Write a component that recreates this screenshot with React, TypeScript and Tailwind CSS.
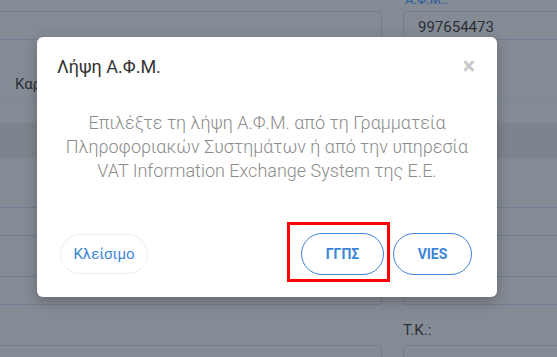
import React from "react";

function InputRow({ value }: { value?: string }) {
  return (
    <div className="flex gap-[21px] -ml-[4px] -mr-[6px]">
      <div className="w-[386px] h-[29px] border border-[#6e7f93] rounded-[4px]" />
      <div className="flex-1 h-[29px] border border-[#6e7f93] rounded-[4px] flex items-center pl-[14px] pt-[3px] text-[15px] text-[#2b2f36]">
        {value}
      </div>
    </div>
  );
}

export default function App() {
  return (
    <div
      className="relative w-[557px] h-[357px] overflow-hidden bg-[#858b94]"
      style={{ fontFamily: "Roboto, 'Noto Sans', sans-serif" }}
    >
      {/* Background page (dimmed) */}
      <div className="flex flex-col">
        <div className="h-[11px] relative">
          <div className="absolute left-[405px] -top-[10px] text-[13px] text-[#2c5f9e]">Α.Φ.Μ.:</div>
        </div>
        <InputRow value="997654473" />
        <div className="h-[60px] flex items-end pl-[15px] pb-[5px] text-[15px] leading-[22px] text-[#2b2f36]">Καρ</div>
        <div className="h-px bg-[#78889a]" />
        <div className="h-[22px]" />
        <div className="h-[35px] bg-[#7e848d]" />
        <div className="h-[49px]" />
        <InputRow />
        <div className="h-[40px]" />
        <InputRow />
        <div className="h-[40px] relative">
          <div className="absolute left-[403px] top-[14px] text-[15px] text-[#2b2f36]">Τ.Κ.:</div>
        </div>
        <InputRow />
      </div>

      {/* Modal */}
      <div className="absolute left-[37px] top-[37px] w-[460px] h-[260px] bg-white rounded-[6px] shadow-[0_4px_14px_rgba(0,0,0,0.25)] flex flex-col">
        <div className="flex items-center justify-between pl-[20px] pr-[22px] pt-[18px]">
          <div className="text-[18px] leading-[24px] text-[#333]">Λήψη Α.Φ.Μ.</div>
          <div className="text-[23px] leading-[24px] font-bold text-[#c8c8c8]">×</div>
        </div>
        <div className="mt-[32px] text-center text-[18px] leading-[24px] font-light text-[#8c8c8c]">
          Επιλέξτε τη λήψη Α.Φ.Μ. από τη Γραμματεία
          <br />
          Πληροφοριακών Συστημάτων ή από την υπηρεσία
          <br />
          VAT Information Exchange System της Ε.Ε.
        </div>
        <div className="relative flex items-center mt-[50px] pl-[23px] pr-[25px]">
          <button className="h-[40px] w-[88px] rounded-full border border-[#e6eef8] text-[15px] font-normal text-[#3b86d6]">
            Κλείσιμο
          </button>
          <div className="flex-1" />
          <button className="h-[42px] w-[83px] rounded-full border border-[#3b86d6] text-[14px] font-bold text-[#3b86d6]">
            ΓΓΠΣ
          </button>
          <button className="ml-[9px] h-[42px] w-[79px] rounded-full border border-[#3b86d6] text-[14px] font-bold text-[#3b86d6]">
            VIES
          </button>
          <div className="absolute left-[250px] -top-[11px] w-[103px] h-[60px] border-[3px] border-[#ff0000]" />
        </div>
      </div>
    </div>
  );
}
